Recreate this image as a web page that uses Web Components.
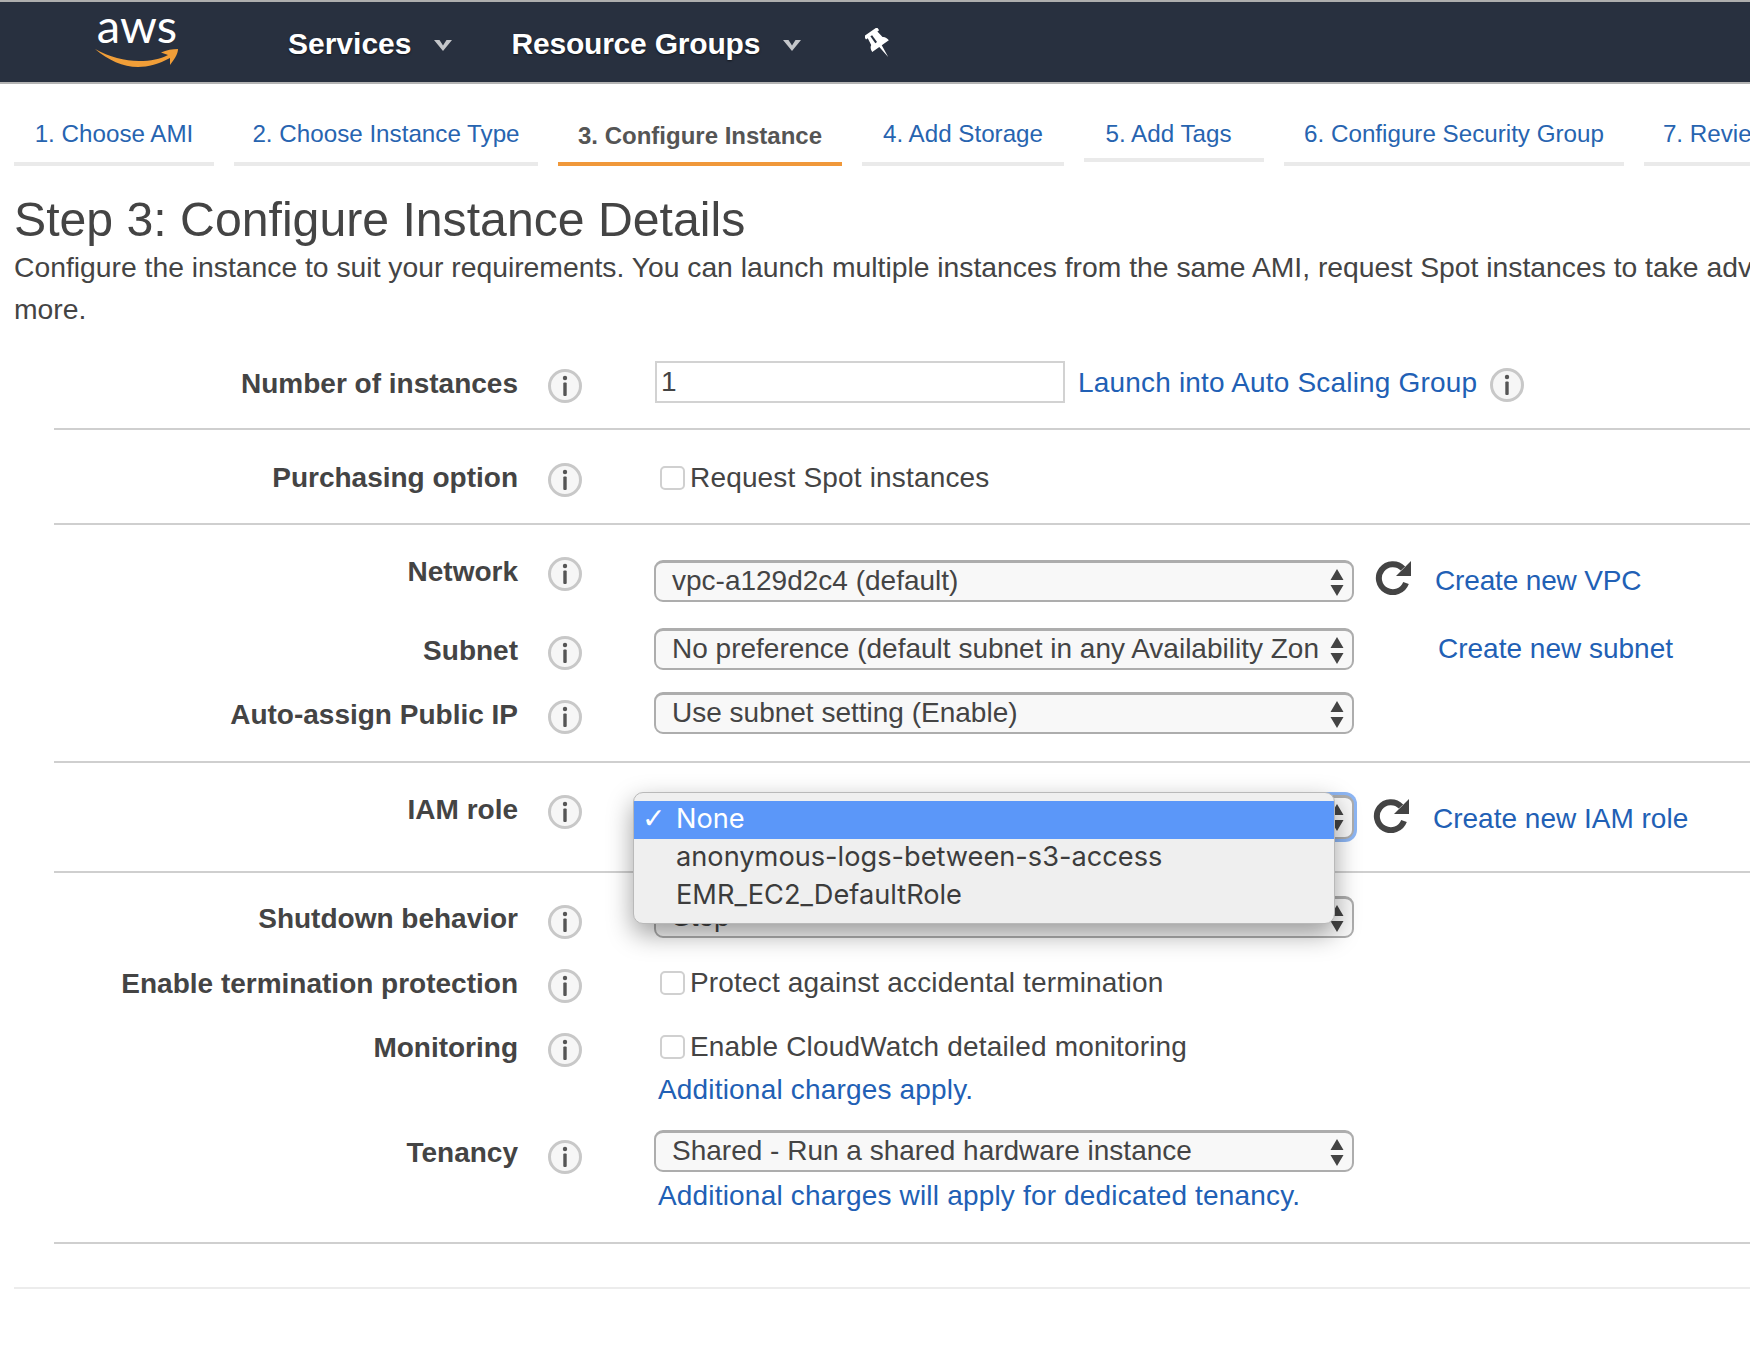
<!DOCTYPE html>
<html lang="en">
<head>
<meta charset="utf-8">
<title>Step 3: Configure Instance Details</title>
<style>
    html, body {
        margin: 0;
        padding: 0;
        overflow: hidden;
        background: #fff;
    }
    body {
        width: 1750px;
        height: 1360px;
        font: 28px/42px "Liberation Sans", Arial, sans-serif;
        color: #444;
    }
</style>
</head>
<body>
<aws-navbar>
    <nav-menu>Services</nav-menu>
    <nav-menu style="letter-spacing:-.2px">Resource Groups</nav-menu>
</aws-navbar>

<wizard-tabs>
    <wizard-tab style="width:200px">1. Choose AMI</wizard-tab>
    <wizard-tab style="width:304px">2. Choose Instance Type</wizard-tab>
    <wizard-tab style="width:284px" active>3. Configure Instance</wizard-tab>
    <wizard-tab style="width:202px">4. Add Storage</wizard-tab>
    <wizard-tab style="box-sizing:border-box;width:180px;padding-right:11px">5. Add Tags</wizard-tab>
    <wizard-tab style="width:340px">6. Configure Security Group</wizard-tab>
    <wizard-tab style="width:144px">7. Review</wizard-tab>
</wizard-tabs>

<step-header heading="Step 3: Configure Instance Details">Configure the instance to suit your requirements. You can launch multiple instances from the same AMI, request Spot instances to take adv<br>more.</step-header>

<form-section style="--pad-top:0px;--pad-bottom:25px;margin-top:31px">
    <form-row label="Number of instances">
        <number-input value="1"></number-input>
        <text-link style="margin-left:13px">Launch into Auto Scaling Group</text-link>
        <info-icon style="margin:6px 0 -10px 12px"></info-icon>
    </form-row>
</form-section>

<form-section style="--pad-top:25px;--pad-bottom:24px">
    <form-row label="Purchasing option" style="--control-top:2px">
        <check-field>Request Spot instances</check-field>
    </form-row>
</form-section>

<form-section style="--pad-top:24px;--pad-bottom:27px">
    <form-row label="Network" style="--control-top:11px">
        <select-box>vpc-a129d2c4 (default)</select-box>
        <refresh-icon style="margin:-1px 0 0 21px"></refresh-icon>
        <text-link style="margin:-1px 0 0 24px;letter-spacing:-.15px">Create new VPC</text-link>
    </form-row>
    <form-row label="Subnet" style="margin-top:26px">
        <select-box>No preference (default subnet in any Availability Zon</select-box>
        <text-link style="margin:-1px 0 0 84px;letter-spacing:0">Create new subnet</text-link>
    </form-row>
    <form-row label="Auto-assign Public IP" style="margin-top:22px">
        <select-box>Use subnet setting (Enable)</select-box>
    </form-row>
</form-section>

<form-section style="--pad-top:24px;--pad-bottom:32px">
    <form-row label="IAM role" style="--control-top:8px">
        <select-box focused>
            <select-menu slot="menu">
                <select-option selected>None</select-option>
                <select-option>anonymous-logs-between-s3-access</select-option>
                <select-option>EMR_EC2_DefaultRole</select-option>
            </select-menu>
        </select-box>
        <refresh-icon style="margin:2px 0 0 19px"></refresh-icon>
        <text-link style="margin:2px 0 0 24px;letter-spacing:0">Create new IAM role</text-link>
    </form-row>
</form-section>

<form-section style="--pad-top:23px;--pad-bottom:26px">
    <form-row label="Shutdown behavior" style="--icon-top:8px">
        <select-box>Stop</select-box>
    </form-row>
    <form-row label="Enable termination protection" style="margin-top:23px;--control-top:1px">
        <check-field>Protect against accidental termination</check-field>
    </form-row>
    <form-row label="Monitoring" style="margin-top:21px;--control-top:1px;--control-dir:column">
        <check-field>Enable CloudWatch detailed monitoring</check-field>
        <text-link style="margin-left:3px">Additional charges apply.</text-link>
    </form-row>
    <form-row label="Tenancy" style="margin-top:20px;--control-dir:column;--icon-top:9px">
        <select-box>Shared - Run a shared hardware instance</select-box>
        <text-link style="margin:2px 0 0 3px">Additional charges will apply for dedicated tenancy.</text-link>
    </form-row>
</form-section>

<page-rule></page-rule>

<script>
/*
class AwsNavbar
dark top bar with the logo, the slotted menus and the pin
*/
class AwsNavbar extends HTMLElement {
    constructor() {
        super();
        let shadowRoot = this.attachShadow({mode: 'open'});
        shadowRoot.innerHTML = `
            <style>
                :host {
                    display: flex;
                    align-items: center;
                    box-sizing: border-box;
                    height: 84px;
                    background: #28303f;
                    border-top: 2px solid #aeaeae;
                    border-bottom: 2px solid #b4b4b4;
                }
                .logo {
                    display: flex;
                    flex-direction: column;
                    align-items: center;
                    align-self: flex-start;
                    width: 84px;
                    margin: 6px 0 0 95px;
                    color: #fff;
                    font: 400 47px/34px Lato, "Open Sans", sans-serif;
                }
                .logo span {
                    display: block;
                    height: 28px;
                }
                .logo svg {
                    display: block;
                    margin-top: 11px;
                }
                .menus {
                    display: flex;
                    margin-left: 109px;
                }
                .pin {
                    display: block;
                    margin: 4px 0 0 5px;
                }
            </style>
            <div class="logo">
                <span>aws</span>
                <svg width="84" height="20" viewBox="0 0 84 20">
                    <path fill="#f19e38" d="M0 2C14 10 30 14 44 14C56 14 65 12 73 8L66 5.500C71 3 78 2 83 2C83 7 79 13 75 18L75 11C64 17 53 20 43 20C28 20 13 13 0 2Z"/>
                </svg>
            </div>
            <div class="menus"><slot></slot></div>
            <svg class="pin" width="28" height="32" viewBox="0 0 26 30">
                <g transform="rotate(-35 13 15)">
                    <path fill="#fff" d="M5.500 1H20.500V4.500H18.500L19.500 11.500C21.500 12.500 22.500 15 22.500 17.500H14.400L13 30L11.600 17.500H3.500C3.500 15 4.500 12.500 6.500 11.500L7.500 4.500H5.500Z"/>
                    <rect x="10.500" y="4.500" width="2" height="8" fill="#28303f"/>
                </g>
            </svg>
        `;
    }
}

/*
class NavMenu
bold white menu title with a small caret
*/
class NavMenu extends HTMLElement {
    constructor() {
        super();
        let shadowRoot = this.attachShadow({mode: 'open'});
        shadowRoot.innerHTML = `
            <style>
                :host {
                    display: flex;
                    align-items: center;
                    margin-right: 59px;
                    padding-top: 4px;
                    color: #fff;
                    font: bold 30px/40px "Liberation Sans", Arial, sans-serif;
                    text-shadow: 0 1px 2px rgba(0, 0, 0, .6);
                }
                svg {
                    display: block;
                    margin: 2px 0 0 23px;
                }
            </style>
            <slot></slot>
            <svg width="18" height="11" viewBox="0 0 18 11">
                <path fill="#c4c6ca" d="M0 0H5.500L9 5.500L12.500 0H18L9 11Z"/>
            </svg>
        `;
    }
}

/*
class WizardTabs
row of the wizard steps, cut off by the right edge of the window
*/
class WizardTabs extends HTMLElement {
    constructor() {
        super();
        let shadowRoot = this.attachShadow({mode: 'open'});
        shadowRoot.innerHTML = `
            <style>
                :host {
                    display: flex;
                    gap: 20px;
                    margin-top: 34px;
                    padding-left: 14px;
                    white-space: nowrap;
                }
            </style>
            <slot></slot>
        `;
    }
}

/*
class WizardTab
one wizard step, its width is set by the user of the element
attributes:
    active: orange bar and bold grey text
*/
class WizardTab extends HTMLElement {
    constructor() {
        super();
        let shadowRoot = this.attachShadow({mode: 'open'});
        shadowRoot.innerHTML = `
            <style>
                :host {
                    display: block;
                    flex: none;
                    height: 44px;
                    border-bottom: 4px solid #eaeaea;
                    color: #2764b0;
                    font-size: 24.200px;
                    line-height: 32px;
                    text-align: center;
                }
                :host([active]) {
                    border-bottom-color: #f0983a;
                    color: #555;
                    font-size: 24px;
                    font-weight: bold;
                    line-height: 36px;
                }
            </style>
            <slot></slot>
        `;
    }
}

/*
class StepHeader
big title of the step and its description below
*/
class StepHeader extends HTMLElement {
    constructor() {
        super();
        let shadowRoot = this.attachShadow({mode: 'open'});
        shadowRoot.innerHTML = `
            <style>
                :host {
                    display: block;
                    margin-top: 28px;
                    padding-left: 14px;
                    font-size: 28.300px;
                    white-space: nowrap;
                }
                h1 {
                    margin: 0 0 2px;
                    font-size: 48.200px;
                    font-weight: normal;
                    line-height: 50px;
                }
            </style>
            <h1>${this.getAttribute('heading')}</h1>
            <slot></slot>
        `;
    }
}

/*
class FormSection
group of form rows closed by a grey rule
styleHooks:
    --pad-top
    --pad-bottom
*/
class FormSection extends HTMLElement {
    constructor() {
        super();
        let shadowRoot = this.attachShadow({mode: 'open'});
        shadowRoot.innerHTML = `
            <style>
                :host {
                    display: block;
                    margin-left: 54px;
                    padding: var(--pad-top, 0) 0 var(--pad-bottom, 0);
                    border-bottom: 2px solid #cfcfcf;
                }
            </style>
            <slot></slot>
        `;
    }
}

/*
class FormRow
right aligned label, info icon and the slotted controls
styleHooks:
    --control-top
    --control-dir
    --icon-top
*/
class FormRow extends HTMLElement {
    constructor() {
        super();
        let shadowRoot = this.attachShadow({mode: 'open'});
        shadowRoot.innerHTML = `
            <style>
                :host {
                    display: grid;
                    grid-template-columns: 464px 137px 1fr;
                    align-items: start;
                }
                .label {
                    height: 42px;
                    font-weight: bold;
                    line-height: 45px;
                    text-align: right;
                    white-space: nowrap;
                }
                info-icon {
                    /* the icon must not make the row taller */
                    margin: var(--icon-top, 7px) 0 -10px 29px;
                }
                .controls {
                    display: flex;
                    flex-direction: var(--control-dir, row);
                    align-items: flex-start;
                    margin-top: var(--control-top, 0);
                    white-space: nowrap;
                }
            </style>
            <div class="label">${this.getAttribute('label')}</div>
            <info-icon></info-icon>
            <div class="controls"><slot></slot></div>
        `;
    }
}

/*
class InfoIcon
grey ring with an i
*/
class InfoIcon extends HTMLElement {
    constructor() {
        super();
        let shadowRoot = this.attachShadow({mode: 'open'});
        shadowRoot.innerHTML = `
            <style>
                :host {
                    display: block;
                    flex: none;
                    width: 36px;
                    height: 36px;
                }
                svg {
                    display: block;
                    filter: blur(.4px);
                }
            </style>
            <svg width="36" height="36" viewBox="0 0 36 36">
                <circle cx="18" cy="18" r="15.500" fill="#f6f6f6" stroke="#c8c8c8" stroke-width="3"/>
                <circle cx="18" cy="10" r="2.200" fill="#555"/>
                <rect x="16.300" y="14.500" width="3.400" height="13.500" rx="1" fill="#555"/>
            </svg>
        `;
    }
}

/*
class RefreshIcon
dark circular arrow
*/
class RefreshIcon extends HTMLElement {
    constructor() {
        super();
        let shadowRoot = this.attachShadow({mode: 'open'});
        shadowRoot.innerHTML = `
            <style>
                :host {
                    display: block;
                    flex: none;
                    width: 36px;
                    height: 36px;
                }
                svg {
                    display: block;
                }
            </style>
            <svg width="36" height="36" viewBox="0 0 36 36">
                <path fill="none" stroke="#444" stroke-width="6" d="M28 9.500A14 14 0 1 0 31 24"/>
                <path fill="#444" d="M36 2V17H21Z"/>
            </svg>
        `;
    }
}

/*
class NumberInput
plain text box
*/
class NumberInput extends HTMLElement {
    constructor() {
        super();
        let shadowRoot = this.attachShadow({mode: 'open'});
        shadowRoot.innerHTML = `
            <style>
                :host {
                    display: block;
                    flex: none;
                }
                input {
                    display: block;
                    box-sizing: border-box;
                    width: 410px;
                    height: 42px;
                    margin: 0;
                    padding: 0 4px;
                    border: 2px solid #d2d2d2;
                    border-radius: 0;
                    outline: none;
                    background: #fff;
                    color: #444;
                    font: inherit;
                }
            </style>
            <input type="text" value="${this.getAttribute('value')}">
        `;
    }
}

/*
class TextLink
blue link text
*/
class TextLink extends HTMLElement {
    constructor() {
        super();
        let shadowRoot = this.attachShadow({mode: 'open'});
        shadowRoot.innerHTML = `
            <style>
                :host {
                    display: block;
                    flex: none;
                    height: 42px;
                    color: #2160b5;
                    letter-spacing: .18px;
                    line-height: 44px;
                    cursor: pointer;
                }
            </style>
            <slot></slot>
        `;
    }
}

/*
class CheckField
empty checkbox with its text
*/
class CheckField extends HTMLElement {
    constructor() {
        super();
        let shadowRoot = this.attachShadow({mode: 'open'});
        shadowRoot.innerHTML = `
            <style>
                :host {
                    display: flex;
                    align-items: center;
                    height: 42px;
                    padding-left: 5px;
                    letter-spacing: .17px;
                }
                .box {
                    flex: none;
                    box-sizing: border-box;
                    width: 25px;
                    height: 24px;
                    margin-right: 5px;
                    border: 2px solid #d0d0d0;
                    border-radius: 5px;
                    background: #fff;
                }
            </style>
            <div class="box"></div>
            <slot></slot>
        `;
    }
}

/*
class SelectBox
mac style closed select, the open list goes in the "menu" slot
attributes:
    focused: blue ring
*/
class SelectBox extends HTMLElement {
    constructor() {
        super();
        let shadowRoot = this.attachShadow({mode: 'open'});
        shadowRoot.innerHTML = `
            <style>
                :host {
                    display: block;
                    flex: none;
                    position: relative;
                    box-sizing: border-box;
                    width: 700px;
                    height: 42px;
                    margin-left: -1px;
                    border: 2px solid #adadad;
                    border-top-width: 3px;
                    border-radius: 9px;
                    background: #f8f8f8;
                }
                :host([focused]) {
                    height: 44px;
                    box-shadow: 0 0 0 3px #8db6f4;
                }
                .value {
                    height: 37px;
                    margin-right: 24px;
                    padding-left: 16px;
                    overflow: hidden;
                    line-height: 36px;
                }
                svg {
                    position: absolute;
                    top: 6px;
                    right: 8px;
                }
            </style>
            <div class="value"><slot></slot></div>
            <svg width="14" height="27" viewBox="0 0 14 27">
                <path fill="#444" d="M7 0L13.500 11H.5ZM.5 16H13.500L7 27Z"/>
            </svg>
            <slot name="menu"></slot>
        `;
    }
}

/*
class SelectMenu
the open list, lies over the form
*/
class SelectMenu extends HTMLElement {
    constructor() {
        super();
        let shadowRoot = this.attachShadow({mode: 'open'});
        shadowRoot.innerHTML = `
            <style>
                :host {
                    display: block;
                    position: absolute;
                    z-index: 10;
                    top: -6px;
                    left: -23px;
                    box-sizing: border-box;
                    width: 702px;
                    height: 132px;
                    padding: 8px 0;
                    border: 1px solid #b9b9b9;
                    border-radius: 10px;
                    background: #efefef;
                    box-shadow: 0 10px 26px rgba(0, 0, 0, .38);
                    overflow: hidden;
                }
            </style>
            <slot></slot>
        `;
    }
}

/*
class SelectOption
one line of the open list
attributes:
    selected: blue line with a check mark
*/
class SelectOption extends HTMLElement {
    constructor() {
        super();
        let shadowRoot = this.attachShadow({mode: 'open'});
        shadowRoot.innerHTML = `
            <style>
                :host {
                    display: flex;
                    height: 38px;
                    color: #3c3c3c;
                    font-family: Inter, "Liberation Sans", sans-serif;
                    font-size: 27.200px;
                    line-height: 36px;
                }
                :host([selected]) {
                    background: #5b97f9;
                    color: #fff;
                }
                .mark {
                    flex: none;
                    width: 42px;
                    padding-left: 8px;
                    box-sizing: border-box;
                    font: bold 28px/36px "DejaVu Sans", sans-serif;
                }
            </style>
            <span class="mark">${this.hasAttribute('selected') ? '\u2713' : ''}</span>
            <slot></slot>
        `;
    }
}

/*
class PageRule
thin light rule at the end of the page
*/
class PageRule extends HTMLElement {
    constructor() {
        super();
        let shadowRoot = this.attachShadow({mode: 'open'});
        shadowRoot.innerHTML = `
            <style>
                :host {
                    display: block;
                    margin: 43px 0 0 14px;
                    border-top: 2px solid #ececec;
                }
            </style>
        `;
    }
}

//leaf elements first, so that they are known when a parent builds its shadow root
window.customElements.define('info-icon', InfoIcon);
window.customElements.define('refresh-icon', RefreshIcon);
window.customElements.define('number-input', NumberInput);
window.customElements.define('text-link', TextLink);
window.customElements.define('check-field', CheckField);
window.customElements.define('select-option', SelectOption);
window.customElements.define('select-menu', SelectMenu);
window.customElements.define('select-box', SelectBox);
window.customElements.define('form-row', FormRow);
window.customElements.define('form-section', FormSection);
window.customElements.define('step-header', StepHeader);
window.customElements.define('wizard-tab', WizardTab);
window.customElements.define('wizard-tabs', WizardTabs);
window.customElements.define('nav-menu', NavMenu);
window.customElements.define('aws-navbar', AwsNavbar);
window.customElements.define('page-rule', PageRule);
</script>
</body>
</html>
